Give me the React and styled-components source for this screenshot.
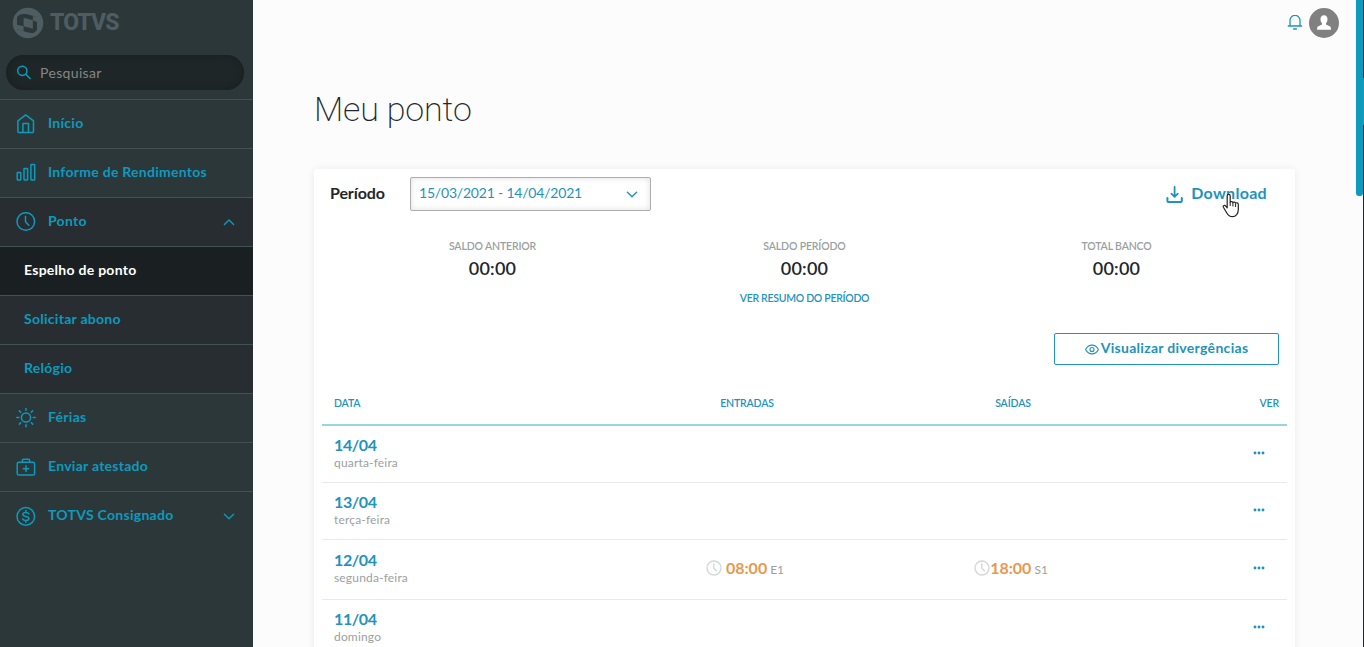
import React from "react"
import styled, { createGlobalStyle } from "styled-components"

const GlobalStyle = createGlobalStyle`
  * {
    box-sizing: border-box;
  }
  body {
    margin: 0;
    overflow: hidden;
    background: #fcfcfc;
    font-family: Lato, "Open Sans", sans-serif;
  }
`

const blue = "#0c9abe"
const linkBlue = "#1e93bd"

/* ---------- layout ---------- */

const Page = styled.div`
  position: relative;
  display: flex;
  height: 647px;
  overflow: hidden;
`

const Sidebar = styled.aside`
  width: 253px;
  flex: none;
  background: #2c3739;
  color: ${blue};
`

const Main = styled.main`
  flex: 1;
`

const ScrollTrack = styled.div`
  display: flex;
  width: 8px;
  justify-content: space-between;
`

const ScrollThumb = styled.div`
  width: 7px;
  height: 196px;
  border-radius: 0 0 3px 3px;
  background: #0c9abe;
`

const WindowEdge = styled.div`
  width: 1px;
  background: linear-gradient(
    #0a2a38 78px,
    #6f7a7f 78px,
    #6f7a7f 125px,
    #0a2a38 125px
  );
`

/* ---------- sidebar ---------- */

const Brand = styled.div`
  display: flex;
  align-items: center;
  gap: 6px;
  height: 46px;
  padding-left: 12px;
  color: #4d5d61;
`

const BrandName = styled.span`
  font-family: Roboto, sans-serif;
  font-size: 23px;
  font-weight: 800;
  line-height: 30px;
  letter-spacing: -0.9px;
`

const SearchBox = styled.label`
  display: flex;
  align-items: center;
  gap: 8px;
  width: 238px;
  height: 35px;
  margin: 9px 0 9px 6px;
  padding-left: 10px;
  border-radius: 18px;
  background: #1f2628;
  box-shadow: inset 0 0 6px #191d1f;
`

const SearchInput = styled.input`
  width: 180px;
  padding: 0;
  border: 0;
  outline: 0;
  background: none;
  font: 14px Lato, sans-serif;
  letter-spacing: 0.35px;
  &::placeholder {
    color: #868686;
    opacity: 1;
  }
`

const MenuItem = styled.a`
  display: flex;
  align-items: center;
  height: 49px;
  padding: 0 18px 0 ${(p) => (p.$sub ? 24 : 16)}px;
  border-top: 1px solid #435153;
  background: ${(p) => (p.$active ? "#1a2022" : p.$open ? "#272d31" : "none")};
  color: ${(p) => (p.$active ? "#fff" : blue)};
  font-size: 14px;
  font-weight: 700;
  letter-spacing: 0.27px;
`

const MenuLabel = styled.span`
  flex: 1;
  padding: 0 0 2px ${(p) => (p.$sub ? 0 : 12)}px;
  line-height: 18px;
`

/* ---------- top bar ---------- */

const TopBar = styled.header`
  display: flex;
  justify-content: flex-end;
  align-items: center;
  gap: 6px;
  height: 46px;
  padding-right: 17px;
  color: ${linkBlue};
`

const Title = styled.h1`
  margin: 38px 0 0 61px;
  height: 85px;
  color: #22262b;
  font: 200 34px/50px Roboto, sans-serif;
  letter-spacing: -0.15px;
`

/* ---------- card ---------- */

const Card = styled.section`
  width: 981px;
  height: 560px;
  margin-left: 61px;
  padding: 8px;
  border-radius: 3px;
  background: #fff;
  box-shadow: 0 0 9px rgba(30, 30, 60, 0.07);
`

const PeriodBar = styled.div`
  display: flex;
  align-items: center;
  height: 34px;
  padding: 0 20px 0 8px;
`

const PeriodLabel = styled.span`
  width: 80px;
  padding-bottom: 3px;
  color: #22262b;
  font-size: 16px;
  font-weight: 700;
  letter-spacing: -0.1px;
`

const PeriodSelect = styled.button`
  display: flex;
  align-items: center;
  justify-content: space-between;
  width: 241px;
  height: 34px;
  padding: 0 12px 1px 8px;
  border: 1px solid #aaaeb0;
  border-radius: 2px;
  background: #fff;
  box-shadow: inset 0 0 6px rgba(0, 0, 0, 0.13);
  color: ${linkBlue};
  font: 14px Lato, sans-serif;
  letter-spacing: -0.2px;
`

const PeriodValue = styled.span`
  padding-bottom: 2px;
`

const DownloadLink = styled.a`
  display: flex;
  align-items: center;
  gap: 8px;
  margin-left: auto;
  color: ${linkBlue};
  font-size: 16px;
  font-weight: 700;
  letter-spacing: 0.3px;
`

const DownloadLabel = styled.span`
  padding-bottom: 3px;
`

const Balances = styled.div`
  display: grid;
  grid-template-columns: repeat(3, 312px);
  justify-content: center;
  margin-top: 28px;
  text-align: center;
`

const Caption = styled.div`
  color: #9a9fa1;
  font-size: 10.5px;
  font-weight: 600;
  line-height: 15px;
  letter-spacing: -0.15px;
`

const Amount = styled.div`
  color: #22262b;
  font-size: 18px;
  font-weight: 600;
  line-height: 28px;
  letter-spacing: 0.2px;
`

const SummaryLink = styled.a`
  display: block;
  margin-top: 9px;
  color: ${linkBlue};
  font-size: 10.5px;
  font-weight: 600;
  line-height: 14px;
  text-align: center;
  letter-spacing: -0.3px;
`

const DivergenceButton = styled.button`
  display: flex;
  align-items: center;
  justify-content: center;
  gap: 2px;
  width: 225px;
  height: 32px;
  margin: 28px 8px 0 auto;
  padding: 0 0 3px;
  border: 1px solid ${linkBlue};
  border-radius: 2px;
  background: #fff;
  color: ${linkBlue};
  font: 700 14px Lato, sans-serif;
  letter-spacing: 0.3px;
`

const TableRow = styled.div`
  display: grid;
  grid-template-columns: 290px 266px 266px 143px;
  align-items: center;
  height: ${(p) => (p.$tall ? 60 : 57)}px;
  padding-bottom: ${(p) => (p.$tall ? 1 : 0)}px;
  border-bottom: 1px solid #e8eaea;
`

const TableHead = styled(TableRow)`
  height: 45px;
  margin-top: 16px;
  border-bottom: 2px solid #97d5df;
  color: ${linkBlue};
  font-size: 10.5px;
  font-weight: 600;
  letter-spacing: -0.15px;
`

const HeadCell = styled.span`
  padding: 0 8px 0 12px;
  text-align: ${(p) => p.$align || "left"};
`

const DayCell = styled.div`
  padding: 0 0 3px 12px;
`

const DayDate = styled.div`
  color: ${linkBlue};
  font-size: 16px;
  font-weight: 700;
  line-height: 20px;
  letter-spacing: -0.4px;
`

const DayName = styled.div`
  color: #9a9fa1;
  font-size: 12px;
  line-height: 16px;
  letter-spacing: 0.17px;
`

const PunchCell = styled.div`
  display: flex;
  align-items: center;
  justify-content: center;
  padding-bottom: 3px;
`

const PunchTime = styled.span`
  margin-left: ${(p) => p.$gap}px;
  color: #e8984c;
  font-size: 16px;
  font-weight: 700;
`

const PunchTag = styled.span`
  margin: 3px 0 0 3px;
  color: #9a9fa1;
  font-size: 12px;
`

const MoreCell = styled.div`
  display: flex;
  justify-content: flex-end;
  padding: 0 22px 2px 0;
`

const Cursor = styled.svg`
  position: absolute;
  left: 1221px;
  top: 193px;
`

/* ---------- icons ---------- */

const Stroke = ({ size = 20, width = 1.5, children, ...rest }) => (
  <svg
    width={size}
    height={size}
    viewBox={`0 0 ${size} ${size}`}
    fill="none"
    stroke="currentColor"
    strokeWidth={width}
    strokeLinecap="round"
    strokeLinejoin="round"
    {...rest}
  >
    {children}
  </svg>
)

const HomeIcon = () => (
  <Stroke>
    <path d="M1.9 6.9 9.7.9l7.8 6v10.500a1 1 0 0 1-1 1H2.9a1 1 0 0 1-1-1z" />
    <path d="M6.9 18.200V9.500h5.600v8.700" />
  </Stroke>
)

const BarsIcon = () => (
  <Stroke width={1.5}>
    <rect x="1.2" y="9.5" width="3.6" height="7.500" rx=".4" />
    <rect x="8" y="5.5" width="3.600" height="11.500" rx=".4" />
    <rect x="14.9" y="1.4" width="3.8" height="15.600" rx=".4" />
  </Stroke>
)

const ClockIcon = () => (
  <Stroke>
    <circle cx="9.8" cy="9.5" r="8.8" />
    <path d="M9.5 4.300v5.400l3.200 3.600" />
  </Stroke>
)

const SunIcon = () => (
  <Stroke>
    <circle cx="10" cy="9.500" r="4.6" />
    <path d="M10 .5v1.800M10 16.700v2M.8 9.500h2M17.2 9.500h2M3.4 2.900l1.300 1.300M15.3 14.800l1.300 1.300M16.6 2.900l-1.300 1.300M4.7 14.800l-1.300 1.300" />
  </Stroke>
)

const BagIcon = () => (
  <Stroke>
    <rect x="1.2" y="5.2" width="17.4" height="12.800" rx="1.6" />
    <path d="M6.4 5V3.2a1 1 0 0 1 1-1h5.200a1 1 0 0 1 1 1V5M10 9v5.400M7.300 11.700h5.400" />
  </Stroke>
)

const DollarIcon = () => (
  <Stroke>
    <circle cx="9.800" cy="10.4" r="8.800" />
    <path d="M12.800 7.900c-.5-1-1.600-1.500-3-1.500-1.600 0-2.900.7-2.900 2 0 2.800 6 1.200 6 4 0 1.300-1.400 2-3.100 2-1.500 0-2.700-.6-3.200-1.600M9.800 4.600v1.700M9.800 14.500v1.700" />
  </Stroke>
)

const SearchIcon = () => (
  <Stroke size={16} width={1.500}>
    <circle cx="6.300" cy="5.800" r="4.600" />
    <path d="m9.700 9.200 4.400 4.300" />
  </Stroke>
)

const Chevron = ({ up }) => (
  <Stroke size={12} width={1.400}>
    <path d={up ? "m1.400 8.500 4.600-4.500L10.600 8.500" : "m1.400 4.200 4.600 4.500 4.600-4.500"} />
  </Stroke>
)

const BrandMark = () => (
  <svg width="32" height="32" viewBox="0 0 32 32">
    <circle cx="16" cy="16" r="15.300" fill="currentColor" />
    <path
      fill="#2c3739"
      d="M8.500 7.500c2.200-.7 4.200-.8 6.500-.2l10 2.700v12.500c-.8 1.600-1.800 2.400-3.200 3.200-2.200.4-4.300.2-6.500-.4L5 22.200V10.500c.8-1.400 2-2.300 3.500-3z"
    />
    <g fill="currentColor">
      <path d="m11.600 10.800 9.300 2.500v8.400l-9.300-2.500z" />
      <path d="m5 17.800 6.600 1.400v5L5 22.200zM20.900 9l4.100 1v5l-4.100-1.500z" />
    </g>
  </svg>
)

const BellIcon = () => (
  <Stroke size={16} width={1.300}>
    <path d="M1.300 11h13.400M3 10.800V5.400a5 5 0 0 1 10 0v5.400M6.600 14h2.800" />
  </Stroke>
)

const Avatar = () => (
  <svg width="30" height="30" viewBox="0 0 30 30">
    <circle cx="15" cy="15" r="15" fill="#808080" />
    <path
      fill="#fff"
      d="M15 7.200c2.200 0 3.700 1.700 3.500 4.200-.1 1.700-.7 3-1.500 3.800v1.300l3.600 1.700c.8.400 1.300 1.200 1.300 2v1.500H8.100v-1.500c0-.8.500-1.600 1.300-2l3.600-1.700v-1.300c-.8-.8-1.400-2.100-1.500-3.800-.2-2.500 1.300-4.200 3.500-4.200z"
    />
  </svg>
)

const DownloadIcon = () => (
  <Stroke size={17} width={2}>
    <path d="M8.600 1v9.400M5.400 7.600l3.200 3.200 3.200-3.200" strokeWidth="1.800" />
    <path d="M1.400 12v3c0 .6.400 1 1 1h12.400c.6 0 1-.4 1-1v-3" />
  </Stroke>
)

const EyeIcon = () => (
  <Stroke size={14} width={1.100}>
    <path d="M.6 8.500C2 5.700 4.400 4.100 7 4.100s5 1.600 6.400 4.400C12 11.300 9.600 12.900 7 12.900S2 11.300.6 8.500z" />
    <circle cx="7" cy="8.500" r="2" />
  </Stroke>
)

const PunchClock = () => (
  <Stroke size={16} width={1.300} color="#d3d6d7">
    <circle cx="8" cy="8" r="7" />
    <path d="M7.800 3.600v4.600l2.600 2.600" />
  </Stroke>
)

const Dots = () => (
  <svg width="12" height="4" viewBox="0 0 12 4" fill={linkBlue}>
    <circle cx="2" cy="2" r="1.450" />
    <circle cx="6" cy="2" r="1.450" />
    <circle cx="10" cy="2" r="1.450" />
  </svg>
)

/* ---------- data ---------- */

const menu = [
  { label: "Início", icon: HomeIcon },
  { label: "Informe de Rendimentos", icon: BarsIcon },
  { label: "Ponto", icon: ClockIcon, open: true, chevron: "up" },
  { label: "Espelho de ponto", sub: true, active: true },
  { label: "Solicitar abono", sub: true, open: true },
  { label: "Relógio", sub: true, open: true },
  { label: "Férias", icon: SunIcon },
  { label: "Enviar atestado", icon: BagIcon },
  { label: "TOTVS Consignado", icon: DollarIcon, chevron: "down" },
]

const balances = ["SALDO ANTERIOR", "SALDO PERÍODO", "TOTAL BANCO"]

const days = [
  { date: "14/04", name: "quarta-feira" },
  { date: "13/04", name: "terça-feira" },
  { date: "12/04", name: "segunda-feira", entry: "08:00", exit: "18:00" },
  { date: "11/04", name: "domingo" },
]

const Punch = ({ time, tag, gap }) => (
  <PunchCell>
    {time && (
      <>
        <PunchClock />
        <PunchTime $gap={gap}>{time}</PunchTime>
        <PunchTag>{tag}</PunchTag>
      </>
    )}
  </PunchCell>
)

const App = () => (
  <>
    <GlobalStyle />
    <Page>
      <Sidebar>
        <Brand>
          <BrandMark />
          <BrandName>TOTVS</BrandName>
        </Brand>
        <SearchBox>
          <SearchIcon />
          <SearchInput placeholder="Pesquisar" />
        </SearchBox>
        <nav>
          {menu.map(({ label, icon: Icon, sub, active, open, chevron }) => (
            <MenuItem key={label} $sub={sub} $active={active} $open={open}>
              {Icon && <Icon />}
              <MenuLabel $sub={sub}>{label}</MenuLabel>
              {chevron && <Chevron up={chevron === "up"} />}
            </MenuItem>
          ))}
        </nav>
      </Sidebar>
      <Main>
        <TopBar>
          <BellIcon />
          <Avatar />
        </TopBar>
        <Title>Meu ponto</Title>
        <Card>
          <PeriodBar>
            <PeriodLabel>Período</PeriodLabel>
            <PeriodSelect>
              <PeriodValue>15/03/2021 - 14/04/2021</PeriodValue>
              <Chevron />
            </PeriodSelect>
            <DownloadLink>
              <DownloadIcon />
              <DownloadLabel>Download</DownloadLabel>
            </DownloadLink>
          </PeriodBar>
          <Balances>
            {balances.map((caption) => (
              <div key={caption}>
                <Caption>{caption}</Caption>
                <Amount>00:00</Amount>
              </div>
            ))}
          </Balances>
          <SummaryLink>VER RESUMO DO PERÍODO</SummaryLink>
          <DivergenceButton>
            <EyeIcon />
            Visualizar divergências
          </DivergenceButton>
          <TableHead>
            <HeadCell>DATA</HeadCell>
            <HeadCell $align="center">ENTRADAS</HeadCell>
            <HeadCell $align="center">SAÍDAS</HeadCell>
            <HeadCell $align="right">VER</HeadCell>
          </TableHead>
          {days.map((day) => (
            <TableRow key={day.date} $tall={Boolean(day.entry)}>
              <DayCell>
                <DayDate>{day.date}</DayDate>
                <DayName>{day.name}</DayName>
              </DayCell>
              <Punch time={day.entry} tag="E1" gap={4} />
              <Punch time={day.exit} tag="S1" gap={0} />
              <MoreCell>
                <Dots />
              </MoreCell>
            </TableRow>
          ))}
        </Card>
      </Main>
      <ScrollTrack>
        <ScrollThumb />
        <WindowEdge />
      </ScrollTrack>
      <Cursor width="20" height="26" viewBox="0 0 20 26">
        <path
          d="M6.200 3c0-2.200 3-2.200 3 0v6.200c.3-1 2.500-.9 2.700.4.600-.9 2.500-.7 2.700.6.700-.8 2.700-.5 2.700 1.100v5.200c0 4-2.300 7.200-5.900 7.200-2.800 0-4.300-1.400-5.600-3.700L2.400 14.200c-.8-1.700 1.100-2.600 2.300-1.200l1.500 1.900z"
          fill="#fff"
          stroke="#222"
          strokeWidth="1.200"
          strokeLinejoin="round"
        />
        <path d="M9.200 9v4M11.900 10v3.500M14.600 10.500V14" stroke="#222" strokeWidth="1" />
      </Cursor>
    </Page>
  </>
)

export default App
